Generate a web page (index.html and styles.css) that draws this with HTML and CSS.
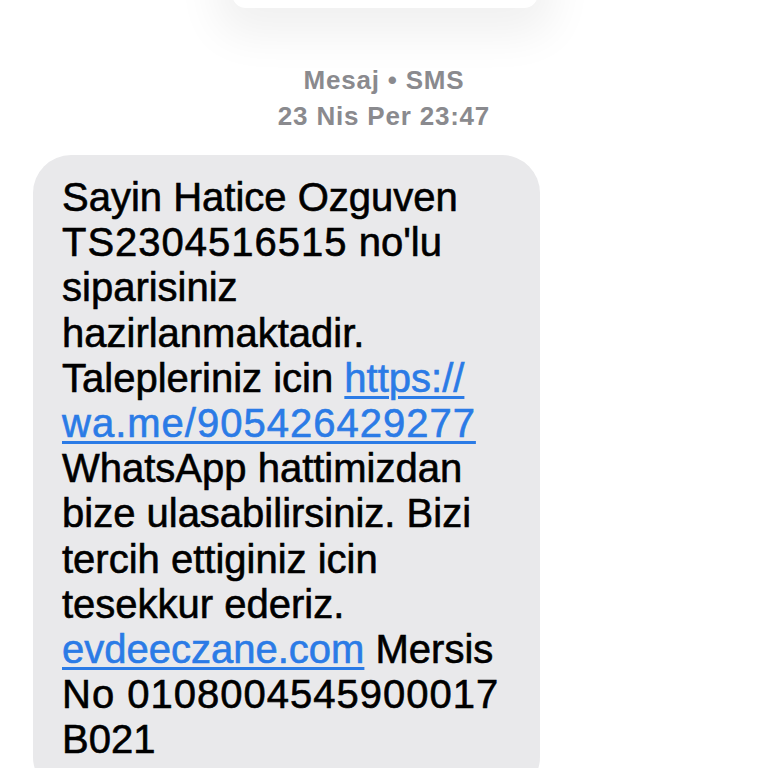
FILE: index.html
```html
<!DOCTYPE html>
<html lang="tr">
<head>
<meta charset="utf-8">
<link rel="stylesheet" href="styles.css">
</head>
<body>
<div class="screen">
  <div class="top-card"></div>
  <div class="meta">
    <div class="meta-line">Mesaj • SMS</div>
    <div class="meta-line">23 Nis Per 23:47</div>
  </div>
  <div class="bubble">
    <p class="msg">Sayin Hatice Ozguven<br>
<span class="num">TS2304516515</span> no'lu<br>
siparisiniz<br>
hazirlanmaktadir.<br>
Talepleriniz icin <a class="link" href="#">https://<br><span class="num-link">wa.me/905426429277</span></a><br>
WhatsApp hattimizdan<br>
bize ulasabilirsiniz. Bizi<br>
tercih ettiginiz icin<br>
tesekkur ederiz.<br>
<a class="link" href="#">evdeeczane.com</a> Mersis<br>
<span class="num">No 0108004545900017</span><br>
B021</p>
  </div>
</div>
</body>
</html>
```

FILE: styles.css
```css
html, body {
  margin: 0;
  padding: 0;
  background: #ffffff;
}

.screen {
  width: 768px;
  height: 768px;
  overflow: hidden;
  position: relative;
  background: #ffffff;
  font-family: "Liberation Sans", Arial, sans-serif;
}

.top-card {
  width: 306px;
  height: 60px;
  margin: -52px auto 0 232px;
  background: #ffffff;
  border-radius: 0 0 14px 14px;
  box-shadow: 0 12px 44px 16px rgba(0, 0, 0, 0.06);
}

.meta {
  margin-top: 54px;
  text-align: center;
  color: #8a8a8e;
  font-weight: 700;
  font-size: 26px;
  line-height: 36px;
  letter-spacing: 0.8px;
}

.bubble {
  margin: 21px 0 0 33px;
  width: 507px;
  height: 640px;
  box-sizing: border-box;
  background: #e9e9eb;
  border-radius: 38px;
  padding: 20px 0 0 29px;
}

.msg {
  margin: 0;
  color: #000000;
  font-size: 40px;
  line-height: 45.2px;
  white-space: nowrap;
  letter-spacing: 0;
  -webkit-text-stroke: 0.6px #000000;
}

.num {
  letter-spacing: 1px;
}

.link {
  color: #2b7be6;
  -webkit-text-stroke: 0.6px #2b7be6;
  text-decoration: underline;
  text-decoration-thickness: 2.5px;
  text-underline-offset: 4px;
}

.num-link {
  letter-spacing: 1px;
}
```
